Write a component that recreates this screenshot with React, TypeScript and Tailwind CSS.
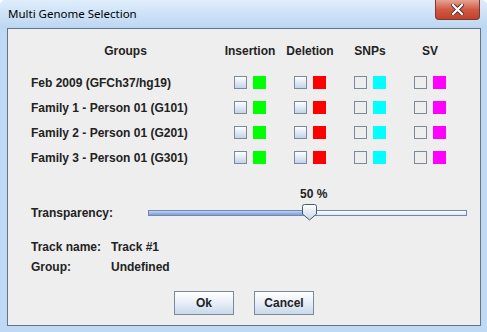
const rows = [
  'Feb 2009 (GFCh37/hg19)',
  'Family 1 - Person 01 (G101)',
  'Family 2 - Person 01 (G201)',
  'Family 3 - Person 01 (G301)',
]

const cols = [
  { name: 'Insertion', color: 'bg-[#00ff00]', shaded: true },
  { name: 'Deletion', color: 'bg-[#ff0000]', shaded: true },
  { name: 'SNPs', color: 'bg-[#00ffff]', shaded: false },
  { name: 'SV', color: 'bg-[#ff00ff]', shaded: false },
]

function Check({ shaded }: { shaded: boolean }) {
  return (
    <div
      className={`w-[13px] h-[13px] border border-[#7a8a9a] ${
        shaded ? 'bg-gradient-to-b from-white to-[#c3d3e6]' : 'bg-[#eeeeee]'
      }`}
    />
  )
}

function Button({ label }: { label: string }) {
  return (
    <div className="w-[60px] h-[24px] flex items-center justify-center border border-[#7a8a99] bg-gradient-to-b from-white via-[#e8eef7] to-[#c9d8ea] text-[12px] font-bold text-[#222]">
      {label}
    </div>
  )
}

export default function App() {
  return (
    <div
      className="w-[487px] h-[332px] flex flex-col bg-[#bfd9f4] rounded-t-[6px] overflow-hidden"
      style={{ fontFamily: '"Liberation Sans", Arial, sans-serif' }}
    >
      <div className="relative h-[28px] flex-none flex items-center pl-[8px] bg-gradient-to-b from-[#dfedfb] to-[#bcd7f3]">
        <span className="text-[11.5px] text-black" style={{ fontFamily: '"Noto Sans", sans-serif' }}>
          Multi Genome Selection
        </span>
        <div className="absolute right-[7px] top-0 w-[45px] h-[20px] rounded-b-[4px] border border-t-0 border-[#7b3a2e] bg-gradient-to-b from-[#e6a294] via-[#cf5a44] to-[#c4402a] flex items-center justify-center">
          <svg width="13" height="11" viewBox="0 0 13 11">
            <path d="M2 1 L11 10 M11 1 L2 10" stroke="#4a2a24" strokeWidth="4" strokeLinecap="square" />
            <path d="M2 1 L11 10 M11 1 L2 10" stroke="#ffffff" strokeWidth="2.2" strokeLinecap="square" />
          </svg>
        </div>
      </div>
      <div className="flex-1 ml-[7px] mr-[6px] mb-[6px] border border-[#657585] bg-[#eeeeee] text-[12px] font-bold text-[#222] flex flex-col">
        <div className="pl-[23px] pt-[14px]">
          <div className="grid grid-cols-[189px_60px_60px_60px_60px]">
            <div className="h-[16px] flex items-center justify-center">Groups</div>
            {cols.map((c) => (
              <div key={c.name} className="h-[16px] flex items-center justify-center">
                {c.name}
              </div>
            ))}
          </div>
          <div className="mt-[11px] grid grid-cols-[189px_60px_60px_60px_60px]">
            {rows.map((r) => (
              <div key={r} className="contents">
                <div className="h-[25px] flex items-center">{r}</div>
                {cols.map((c) => (
                  <div key={c.name} className="h-[25px] flex items-center justify-center gap-[6px]">
                    <Check shaded={c.shaded} />
                    <div className={`w-[13px] h-[13px] ${c.color}`} />
                  </div>
                ))}
              </div>
            ))}
          </div>
        </div>
        <div className="mt-[16px] pl-[23px] flex items-start">
          <div className="w-[117px] mt-[24px] h-[6px] flex items-center">Transparency:</div>
          <div className="w-[319px] flex flex-col">
            <div className="h-[16px] flex items-center pl-[152px]">50 %</div>
            <div className="relative mt-[8px] mb-[2px] h-[6px] border border-[#6d87b8] bg-gradient-to-b from-white to-[#dfe6ee]">
              <div className="h-full w-[158px] bg-gradient-to-b from-[#c6d6ee] via-[#9bb6e0] to-[#7fa0d6]" />
              <svg className="absolute left-[153px] top-[-7px]" width="15" height="17" viewBox="0 0 15 17">
                <defs>
                  <linearGradient id="thumb" x1="0" y1="0" x2="0" y2="1">
                    <stop offset="0" stopColor="#ffffff" />
                    <stop offset="1" stopColor="#c7d6ea" />
                  </linearGradient>
                </defs>
                <path d="M0.5 2.5 Q0.5 0.5 2.5 0.5 L12.5 0.5 Q14.5 0.5 14.5 2.5 L14.5 10 L7.5 16 L0.5 10 Z" fill="url(#thumb)" stroke="#4a5a6c" strokeWidth="1" />
              </svg>
            </div>
          </div>
        </div>
        <div className="mt-[21px] pl-[23px] flex flex-col gap-[4px]">
          <div className="flex h-[16px] items-center">
            <div className="w-[80px]">Track name:</div>
            <div>Track #1</div>
          </div>
          <div className="flex h-[16px] items-center">
            <div className="w-[80px]">Group:</div>
            <div>Undefined</div>
          </div>
        </div>
        <div className="mt-[16px] flex justify-center gap-[20px]">
          <Button label="Ok" />
          <Button label="Cancel" />
        </div>
      </div>
    </div>
  )
}
